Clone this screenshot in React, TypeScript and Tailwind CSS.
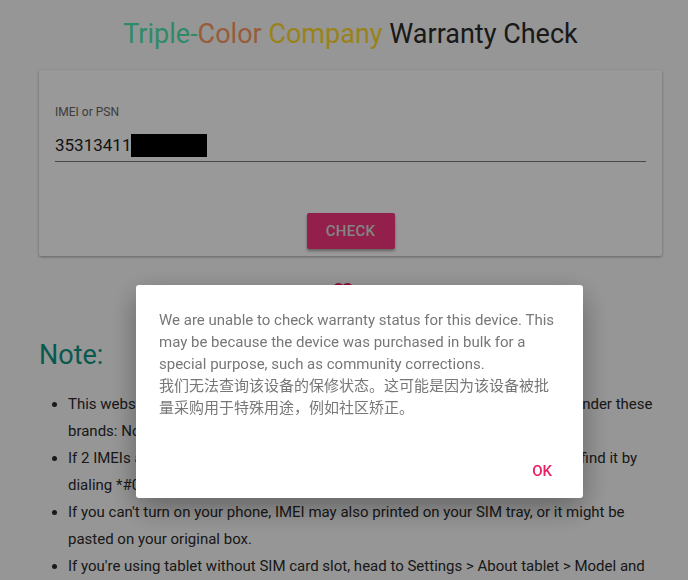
import { useState } from "react";

const notes = [
  "This website can only be used to check warranty of phones and tablets sold under these brands: Nokia, Alcatel and TCL.",
  "If 2 IMEIs are shown, please enter either one of them. If you forgot it, you can find it by dialing *#06# on your phone.",
  "If you can't turn on your phone, IMEI may also printed on your SIM tray, or it might be pasted on your original box.",
  "If you're using tablet without SIM card slot, head to Settings > About tablet > Model and hardware to find the serial number.",
];

function Heart() {
  return (
    <svg viewBox="0 0 24 24" className="h-6 w-6 fill-[#e91e63]">
      <path d="M12 21.35l-1.45-1.32C5.4 15.36 2 12.28 2 8.5 2 5.42 4.42 3 7.5 3c1.74 0 3.41.81 4.5 2.09C13.09 3.81 14.76 3 16.5 3 19.58 3 22 5.42 22 8.5c0 3.78-3.4 6.86-8.55 11.54L12 21.35z" />
    </svg>
  );
}

export default function App() {
  const [imei] = useState("35313411");
  const [open, setOpen] = useState(true);

  return (
    <div className="min-h-screen bg-[#fbfbfb] font-['Roboto','Noto_Sans_CJK_SC',sans-serif] text-[#222]">
      <div className="ml-[39px] w-[623px] pt-[17px]">
        <h1 className="text-center text-[27px] leading-[34px] font-normal">
          <span className="text-[#4ee8ae]">Triple-</span>
          <span className="text-[#fc9a62]">Color</span>{" "}
          <span className="text-[#ffd92c]">Company</span>{" "}
          <span className="text-[#2a2a2a]">Warranty Check</span>
        </h1>

        <div className="mt-[19px] rounded-[2px] bg-white px-4 pt-[35px] pb-[7px] shadow-[0_1px_3px_rgba(0,0,0,0.35)]">
          <label className="block text-[12px] leading-[14px] text-[#666]">IMEI or PSN</label>
          <div className="mt-[14px] flex h-[29px] items-center border-b border-[#777] pb-[3px]">
            <span className="text-[17px] text-[#222]">{imei}</span>
            <span className="inline-block h-[23px] w-[76px] bg-black" />
          </div>
          <div className="mt-[51px] flex justify-center">
            <button
              type="button"
              className="h-[36px] w-[88px] rounded-[2px] bg-[#f4367c] text-[15px] font-medium tracking-[0.3px] text-[#ddd] shadow-[0_2px_3px_rgba(0,0,0,0.35)]"
            >
              CHECK
            </button>
          </div>
        </div>

        <div className="mt-[24px] flex justify-center pr-[15px]">
          <Heart />
        </div>

        <h2 className="mt-[34px] text-[27px] leading-[34px] font-normal text-[#0f9482]">Note:</h2>
        <ul className="mt-[19px] list-disc pl-[29px] text-[15px] leading-[27px] text-[#2a2a2a]">
          {notes.map((n, i) => (
            <li key={i}>{n}</li>
          ))}
        </ul>
      </div>

      {open && (
        <div className="fixed inset-0 bg-black/40" onClick={() => setOpen(false)}>
          <div
            className="ml-[136px] mt-[285px] w-[447px] rounded-[3px] bg-white shadow-[0_10px_30px_rgba(0,0,0,0.35)]"
            onClick={(e) => e.stopPropagation()}
          >
            <p className="px-[23px] pt-[24px] text-[15px] leading-[22px] text-[#777]">
              We are unable to check warranty status for this device. This may be because the device was purchased in
              bulk for a special purpose, such as community corrections.
              <br />
              我们无法查询该设备的保修状态。这可能是因为该设备被批量采购用于特殊用途，例如社区矫正。
            </p>
            <div className="flex justify-end px-[15px] pt-[34px] pb-[9px]">
              <button
                type="button"
                onClick={() => setOpen(false)}
                className="h-[36px] rounded-[2px] px-4 text-[15px] font-medium text-[#e91e63]"
              >
                OK
              </button>
            </div>
          </div>
        </div>
      )}
    </div>
  );
}
